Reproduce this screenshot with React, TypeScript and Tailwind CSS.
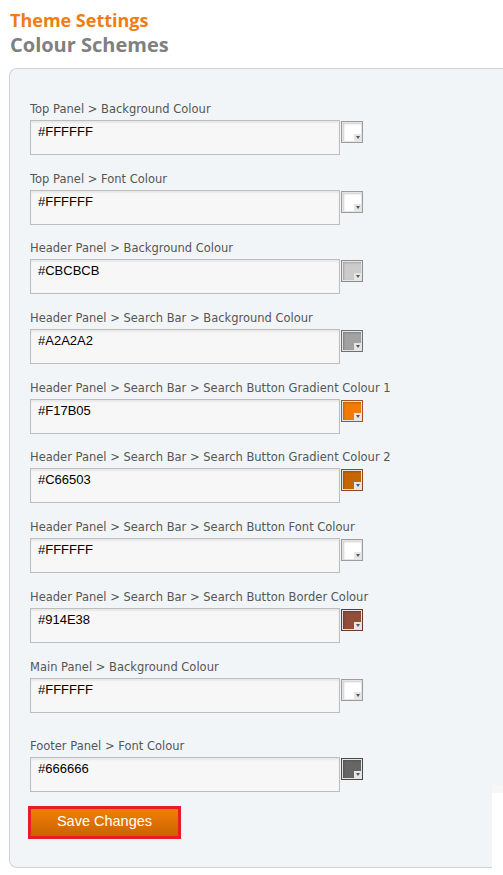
import React from "react";

type Field = { label: string; value: string; edge: string };

const fields: Field[] = [
  { label: "Top Panel > Background Colour", value: "#FFFFFF", edge: "#9c9c9c" },
  { label: "Top Panel > Font Colour", value: "#FFFFFF", edge: "#9c9c9c" },
  { label: "Header Panel > Background Colour", value: "#CBCBCB", edge: "#8c8c8c" },
  { label: "Header Panel > Search Bar > Background Colour", value: "#A2A2A2", edge: "#707070" },
  { label: "Header Panel > Search Bar > Search Button Gradient Colour 1", value: "#F17B05", edge: "#a0562a" },
  { label: "Header Panel > Search Bar > Search Button Gradient Colour 2", value: "#C66503", edge: "#8f4a22" },
  { label: "Header Panel > Search Bar > Search Button Font Colour", value: "#FFFFFF", edge: "#9c9c9c" },
  { label: "Header Panel > Search Bar > Search Button Border Colour", value: "#914E38", edge: "#6a3a2a" },
  { label: "Main Panel > Background Colour", value: "#FFFFFF", edge: "#9c9c9c" },
];

const footer: Field = { label: "Footer Panel > Font Colour", value: "#666666", edge: "#4a4a4a" };

const Swatch = ({ value, edge }: { value: string; edge: string }) => (
  <div
    className="relative mt-[1px] ml-[1px] h-[22px] w-[22px] border p-[1px] bg-[#e4e4e4]"
    style={{ borderColor: edge }}
  >
    <div
      className="h-full w-full shadow-[inset_1px_1px_2px_rgba(0,0,0,0.2)]"
      style={{ backgroundColor: value }}
    />
    <div className="absolute bottom-[1px] right-[1px] flex h-[7px] w-[7px] items-center justify-center bg-[#e6e6e6]">
      <div className="h-0 w-0 border-x-[2px] border-t-[3px] border-x-transparent border-t-[#555]" />
    </div>
  </div>
);

const Row = ({ f, last }: { f: Field; last?: boolean }) => (
  <div className={last ? "" : "mb-[17.7px]"}>
    <div className="mb-[4px] h-[13px] whitespace-nowrap text-[11.5px] leading-[13px] text-[#555] font-['DejaVu_Sans',sans-serif]">
      {f.label}
    </div>
    <div className="flex items-start">
      <div className="h-[35px] w-[310px] border border-[#bdbdbd] bg-[#f7f7f7] px-[7px] pt-[3px] text-[13px] leading-[15px] text-black font-['Liberation_Sans',Arial,sans-serif] shadow-[inset_0_2px_2px_rgba(0,0,0,0.06)]">
        {f.value}
      </div>
      <Swatch value={f.value} edge={f.edge} />
    </div>
  </div>
);

export default function App() {
  return (
    <div className="relative h-[875px] w-[503px] overflow-hidden bg-white">
      <div className="pl-[10px] pt-[8px] font-['Open_Sans',sans-serif] font-bold">
        <div className="text-[18px] leading-[24px] text-[#f07d12]">Theme Settings</div>
        <div className="text-[20px] leading-[26px] text-[#808080]">Colour Schemes</div>
      </div>
      <div className="ml-[9px] mt-[10px] w-[540px] rounded-l-[8px] border border-r-0 border-[#cfd3d6] bg-[#f1f5f8] pl-[20px] pt-[34px] pb-[28px]">
        {fields.map((f) => (
          <Row key={f.label} f={f} />
        ))}
        <div className="mt-[27px]">
          <Row f={footer} last />
        </div>
        <div className="mt-[14px] ml-[-2px] inline-block">
          <button className="border-[3px] border-[#e81c24] bg-gradient-to-b from-[#f27f06] to-[#c96402] h-[33px] w-[153px] text-[14.5px] text-white font-['Liberation_Sans',Arial,sans-serif]">
            Save Changes
          </button>
        </div>
      </div>
      <div className="absolute left-[492px] top-[785px] h-[90px] w-[11px] bg-white border-t-[8px] border-[#f7f7f7]" />
    </div>
  );
}
